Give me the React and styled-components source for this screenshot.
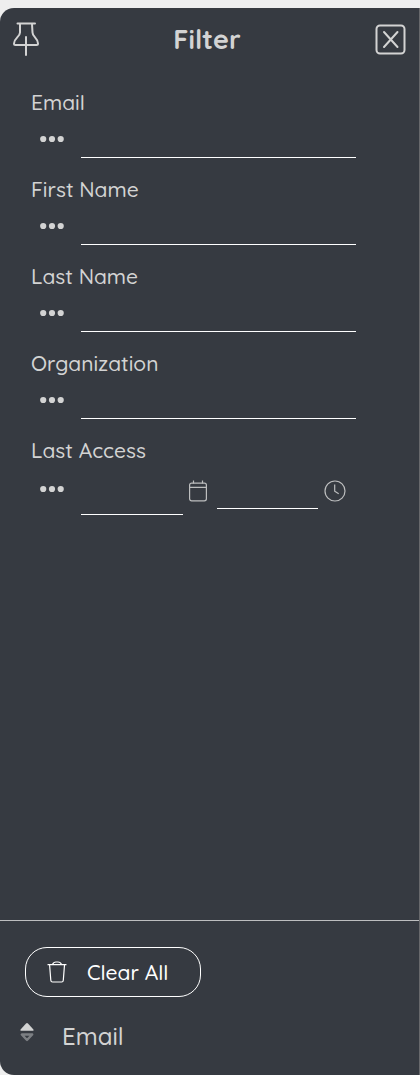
import React, { useState } from "react";
import styled, { createGlobalStyle } from "styled-components";

const textFields = [
  { id: "email", label: "Email" },
  { id: "firstName", label: "First Name" },
  { id: "lastName", label: "Last Name" },
  { id: "organization", label: "Organization" },
];

const emptyFilter = {
  email: "",
  firstName: "",
  lastName: "",
  organization: "",
  accessDate: "",
  accessTime: "",
};

function PinIcon() {
  return (
    <svg width="26" height="34" viewBox="0 0 26 34" fill="none" stroke="currentColor" strokeWidth="2" strokeLinecap="round" strokeLinejoin="round">
      <path d="M4.500 1.500H22M7 2v8.500C7 15 1 16 1 21.500Q1 23 2.500 23H23.500Q25 23 25 21.500C25 16 19.500 15 19.500 10.500L19 2M13 15v18" />
    </svg>
  );
}

function CloseIcon() {
  return (
    <svg width="31" height="31" viewBox="0 0 31 31" fill="none" stroke="currentColor" strokeWidth="2" strokeLinecap="round">
      <rect x="1.500" y="1.500" width="28" height="28" rx="3.500" />
      <path d="M9 8l13.500 15M22.500 8L9 23" />
    </svg>
  );
}

function DotsIcon() {
  return (
    <svg width="24" height="8" viewBox="0 0 24 8" fill="currentColor">
      <circle cx="3.200" cy="4" r="3.100" />
      <circle cx="12" cy="4" r="3.100" />
      <circle cx="20.700" cy="4" r="3.100" />
    </svg>
  );
}

function CalendarIcon() {
  return (
    <svg width="18" height="22" viewBox="0 0 18 22" fill="none" stroke="currentColor" strokeWidth="1.200">
      <rect x="0.600" y="3.200" width="16.800" height="17.600" rx="2" />
      <path d="M1 7.300h16M4.500 0.500v3M13.500 0.500v3" />
    </svg>
  );
}

function ClockIcon() {
  return (
    <svg width="22" height="22" viewBox="0 0 22 22" fill="none" stroke="currentColor" strokeWidth="1.200">
      <circle cx="11" cy="11" r="10" />
      <path d="M10.700 4.500v6.700l4 2.600" />
    </svg>
  );
}

function TrashIcon() {
  return (
    <svg width="20" height="22" viewBox="0 0 20 22" fill="none" stroke="currentColor" strokeWidth="1.200" strokeLinecap="round" strokeLinejoin="round">
      <path d="M1 3.700h18M2.600 4l1.200 15.200q.1 1.800 1.800 1.800h9q1.600 0 1.700-1.800L17.500 4M5.500 3.500Q6.500 1 9 1h2q2.500 0 3.500 2.500" />
    </svg>
  );
}

function SortIcon() {
  return (
    <svg width="14" height="20" viewBox="0 0 14 20">
      <path d="M1 8.800Q-.2 8.500 .8 7.300L6 1.600q1-1 2 0l5.200 5.700q1 1.200-.2 1.500z" fill="#d3d3d3" />
      <path d="M1.800 12.500h10.400L7 18z" fill="none" stroke="#7c7f83" strokeWidth="2.400" strokeLinejoin="round" />
    </svg>
  );
}

function App() {
  const [filter, setFilter] = useState(emptyFilter);

  const handleChange = (e) => {
    setFilter({ ...filter, [e.target.name]: e.target.value });
  };

  return (
    <>
      <GlobalStyle />
      <Page>
        <Panel>
          <Header>
            <IconButton type="button" aria-label="Pin">
              <PinIcon />
            </IconButton>
            <Title>Filter</Title>
            <IconButton type="button" aria-label="Close">
              <CloseIcon />
            </IconButton>
          </Header>
          <Fields>
            {textFields.map((field) => (
              <Field key={field.id}>
                <FieldLabel htmlFor={field.id}>{field.label}</FieldLabel>
                <FieldRow $height={42}>
                  <DotsButton type="button" aria-label={`${field.label} options`}>
                    <DotsIcon />
                  </DotsButton>
                  <LineInput
                    id={field.id}
                    name={field.id}
                    value={filter[field.id]}
                    onChange={handleChange}
                    $height={42}
                  />
                </FieldRow>
              </Field>
            ))}
            <Field>
              <FieldLabel htmlFor="accessDate">Last Access</FieldLabel>
              <DateRow $height={54}>
                <DotsButton type="button" aria-label="Last Access options" $tall>
                  <DotsIcon />
                </DotsButton>
                <LineInput
                  id="accessDate"
                  name="accessDate"
                  value={filter.accessDate}
                  onChange={handleChange}
                  $height={51}
                />
                <PickerButton type="button" aria-label="Pick date" $gapAfter={10}>
                  <CalendarIcon />
                </PickerButton>
                <LineInput
                  name="accessTime"
                  aria-label="Last Access time"
                  value={filter.accessTime}
                  onChange={handleChange}
                  $height={45}
                />
                <PickerButton type="button" aria-label="Pick time">
                  <ClockIcon />
                </PickerButton>
              </DateRow>
            </Field>
          </Fields>
          <Footer>
            <ClearButton type="button" onClick={() => setFilter(emptyFilter)}>
              <TrashIcon />
              Clear All
            </ClearButton>
            <SortButton type="button">
              <SortIcon />
              Email
            </SortButton>
          </Footer>
        </Panel>
      </Page>
    </>
  );
}

export default App;

const GlobalStyle = createGlobalStyle`
  * {
    box-sizing: border-box;
  }
  body {
    margin: 0;
    background: #eeeeee;
    font-family: Quicksand, Lato, sans-serif;
    font-weight: 500;
  }
  button, input {
    font-family: inherit;
    font-weight: inherit;
    color: inherit;
    background: none;
    border: none;
    border-radius: 0;
    padding: 0;
    margin: 0;
  }
  button {
    cursor: pointer;
  }
  svg {
    display: block;
    flex-shrink: 0;
  }
`;

const Page = styled.div`
  display: flex;
  min-height: 100vh;
  padding-top: 8px;
`;

const Panel = styled.section`
  display: flex;
  flex-direction: column;
  flex: 1;
  min-width: 0;
  color: #d3d3d3;
  background: #363a41;
  border-right: 1px solid #68696c;
  border-radius: 14px 0 0 14px;
`;

const Header = styled.header`
  display: flex;
  justify-content: space-between;
  align-items: center;
  height: 62px;
  padding: 0 13px;
`;

const Title = styled.h1`
  margin: 0;
  font-size: 27px;
  line-height: 36px;
  font-weight: 700;
`;

const IconButton = styled.button`
  display: flex;
`;

const Fields = styled.div`
  display: flex;
  flex-direction: column;
  flex: 1;
  gap: 17px;
  padding: 18px 63px 0 31px;
`;

const Field = styled.div`
  display: flex;
  flex-direction: column;
`;

const FieldLabel = styled.label`
  font-size: 21px;
  line-height: 28px;
`;

const FieldRow = styled.div`
  display: flex;
  align-items: flex-start;
  height: ${(props) => props.$height}px;
`;

const DateRow = styled(FieldRow)`
  padding-right: 10px;
`;

const DotsButton = styled.button`
  display: flex;
  justify-content: center;
  align-items: center;
  flex-shrink: 0;
  width: 42px;
  height: ${(props) => (props.$tall ? 50 : 46)}px;
  margin-right: 8px;
`;

const LineInput = styled.input`
  flex: 1;
  min-width: 0;
  height: ${(props) => props.$height}px;
  font-size: 21px;
  border-bottom: 1px solid #ffffff;
  outline: none;
`;

const PickerButton = styled.button`
  display: flex;
  flex-shrink: 0;
  margin-right: ${(props) => props.$gapAfter || 0}px;
  padding: 16px 0 16px 6px;
  color: #bdbebf;
`;

const Footer = styled.footer`
  display: flex;
  flex-direction: column;
  align-items: flex-start;
  gap: 25px;
  padding: 26px 20px 25px;
  border-top: 1px solid #bdbebf;
`;

const ClearButton = styled.button`
  display: flex;
  align-items: center;
  gap: 20px;
  height: 50px;
  margin-left: 5px;
  padding: 0 32px 0 21px;
  color: #ffffff;
  font-size: 21px;
  line-height: 28px;
  border: 1px solid #ffffff;
  border-radius: 22px;
`;

const SortButton = styled.button`
  display: flex;
  align-items: flex-start;
  gap: 28px;
  font-size: 24px;
  line-height: 28px;
`;
